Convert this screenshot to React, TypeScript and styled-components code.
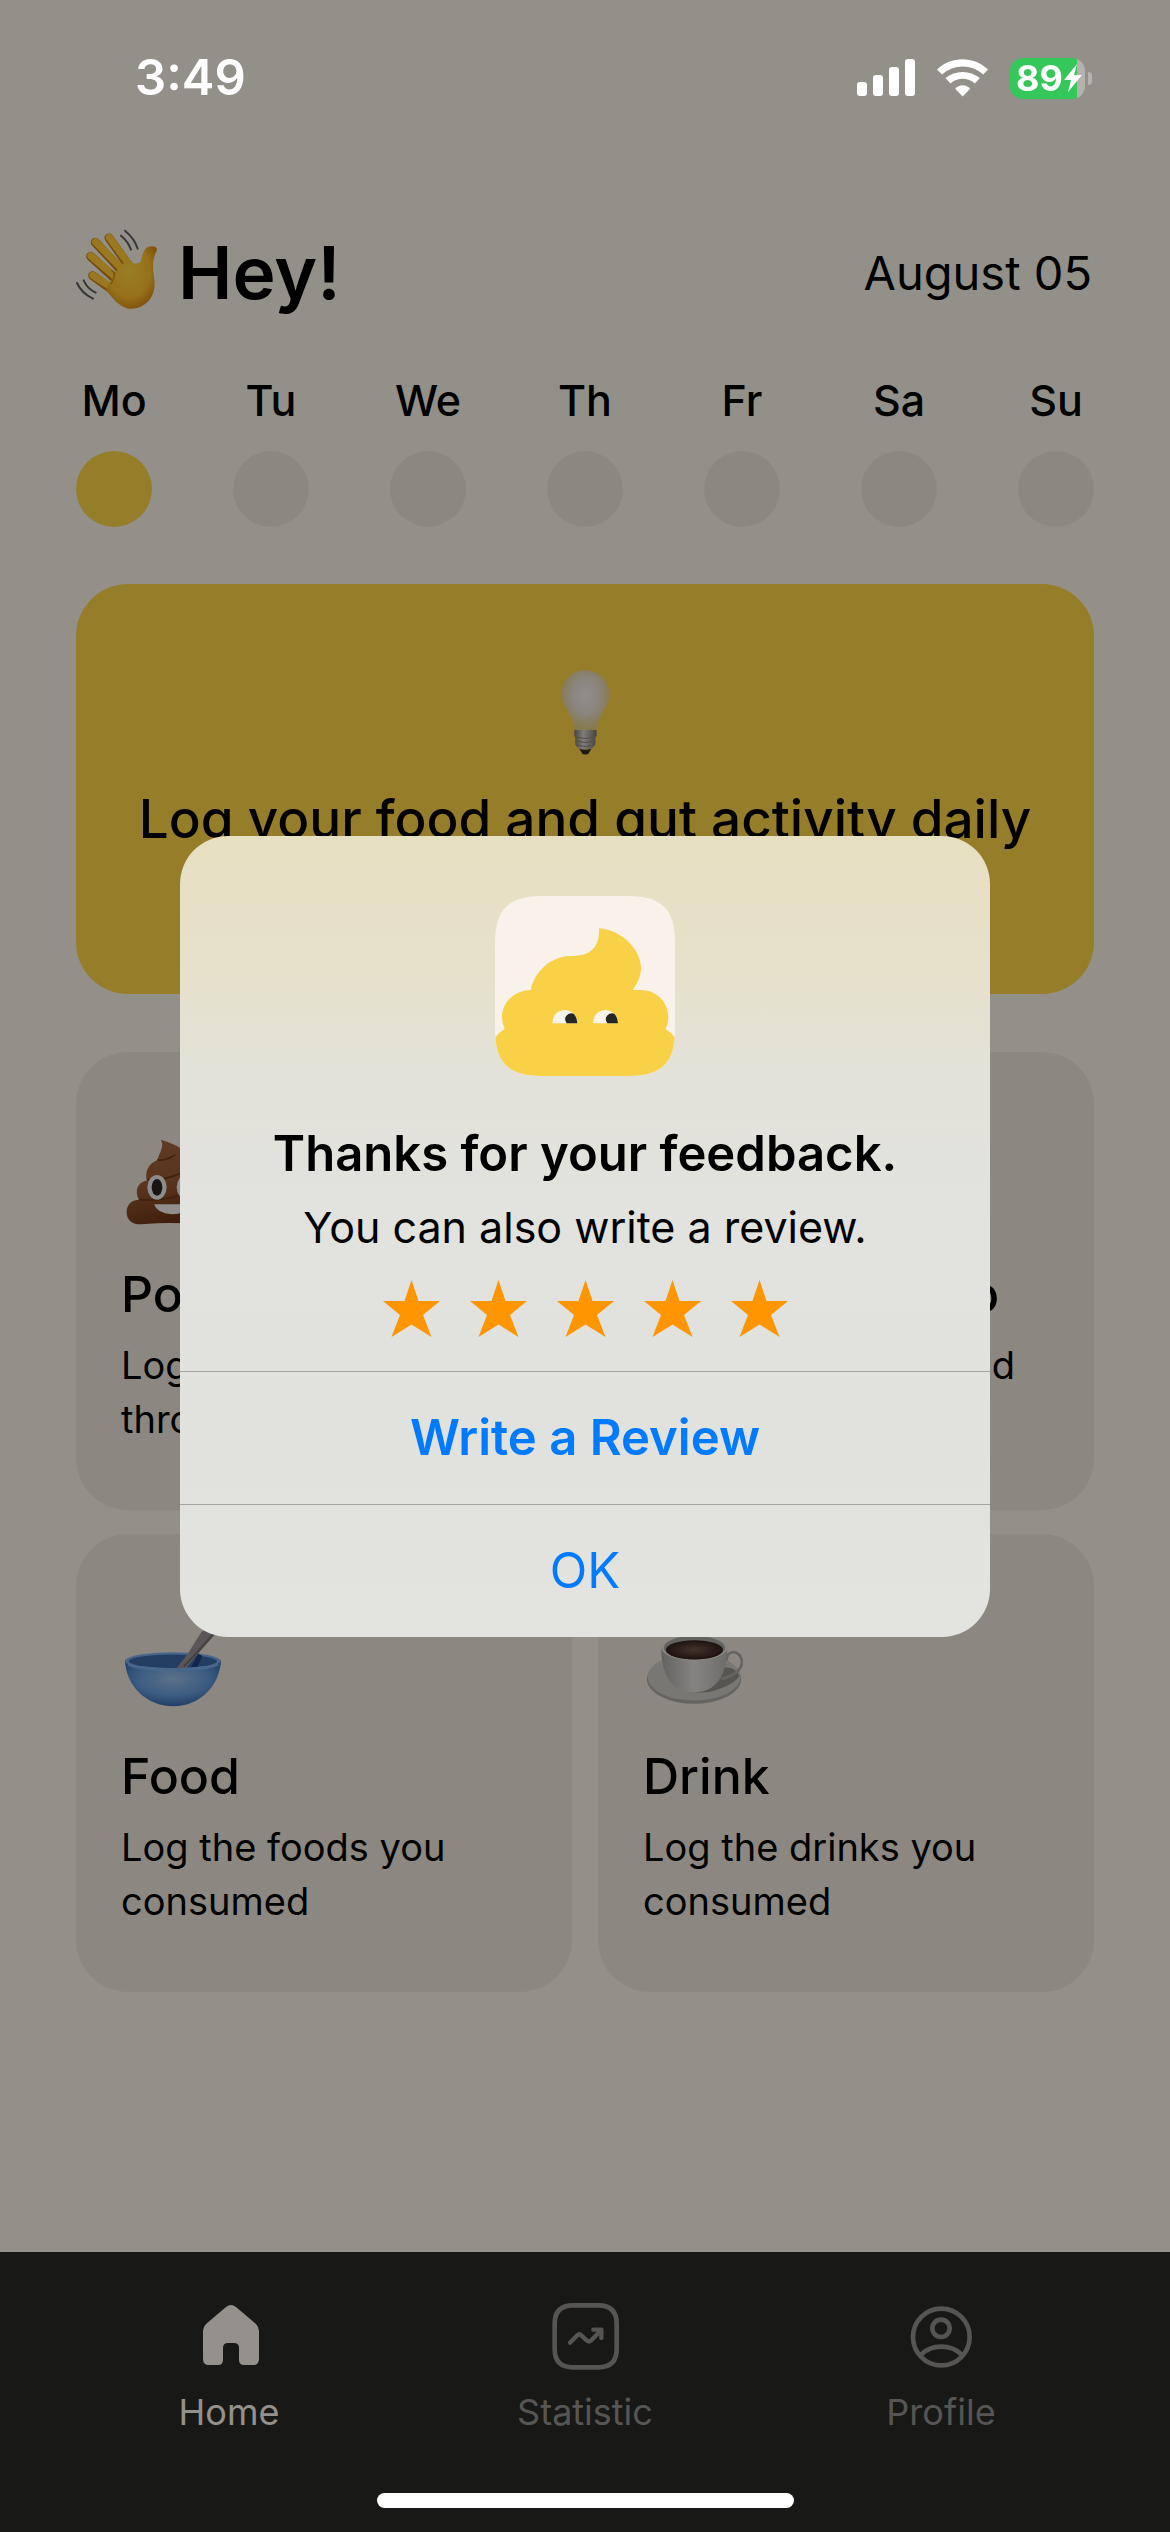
import React from "react";
import styled, { createGlobalStyle } from "styled-components";

const GlobalStyle = createGlobalStyle`
  *, *::before, *::after { box-sizing: border-box; }
  html, body { margin: 0; padding: 0; }
  body {
    font-family: Inter, "Liberation Sans", sans-serif;
    color: #000;
    background: #f5f0e7;
  }
  h1, h2, h3, p { margin: 0; font-weight: inherit; }
  button { font-family: inherit; border: 0; background: none; padding: 0; cursor: pointer; }
`;

const Page = styled.div`
  min-height: 100vh;
  display: flex;
  flex-direction: column;
  background: #f5f0e7;
`;

const StatusBar = styled.header`
  position: relative;
  z-index: 2;
  height: 156px;
  padding: 0 78px 0 135px;
  display: flex;
  align-items: center;
  justify-content: space-between;
  color: #fff;
`;

const Clock = styled.time`
  font-size: 49px;
  line-height: 60px;
  font-weight: 600;
`;

const StatusIcons = styled.div`
  display: flex;
  align-items: center;
  gap: 22px;
`;

const Battery = styled.div`
  position: relative;
  display: flex;
  align-items: center;
  gap: 1px;
  width: 75px;
  height: 41px;
  margin-right: 7px;
  padding-left: 6px;
  border-radius: 13px;
  background: linear-gradient(90deg, #34c759 0 67px, #b5b2ae 67px);
  font-size: 36px;
  line-height: 41px;
  font-weight: 700;

  svg {
    flex-shrink: 0;
  }

  &::after {
    content: "";
    position: absolute;
    left: 78px;
    top: 14px;
    width: 4px;
    height: 13px;
    border-radius: 0 4px 4px 0;
    background: #b5b2ae;
  }
`;

const Main = styled.main`
  flex: 1;
  padding: 74px 76px 60px;
`;

const Greeting = styled.div`
  display: flex;
  align-items: center;
  justify-content: space-between;
  height: 86px;
`;

const Hello = styled.h1`
  display: flex;
  align-items: flex-start;
  gap: 20px;
  font-size: 73px;
  line-height: 88px;
  font-weight: 600;
`;

const Today = styled.time`
  padding-right: 2px;
  font-size: 47px;
  line-height: 54px;
  font-weight: 400;
`;

const Week = styled.div`
  display: flex;
  justify-content: space-between;
  margin-top: 54px;
`;

const Day = styled.button`
  width: 76px;
  display: flex;
  flex-direction: column;
  align-items: center;
  gap: 21px;
  font-size: 43px;
  line-height: 60px;
  font-weight: 500;
  color: #000;
`;

const DayDot = styled.span<{ $active: boolean }>`
  width: 76px;
  height: 76px;
  border-radius: 50%;
  background: ${(p) => (p.$active ? "#f8d147" : "#eae3d7")};
`;

const Banner = styled.section`
  display: flex;
  flex-direction: column;
  align-items: center;
  gap: 26px;
  margin-top: 57px;
  padding: 80px 40px 142px;
  border-radius: 52px;
  background: #f8d147;
`;

const BannerText = styled.p`
  font-size: 53px;
  line-height: 66px;
  font-weight: 500;
  text-align: center;
`;

const Cards = styled.section`
  display: grid;
  grid-template-columns: 1fr 1fr;
  gap: 24px 26px;
  margin-top: 58px;
`;

const Card = styled.article`
  padding: 73px 45px 64px;
  border-radius: 52px;
  background: #eae3d7;
`;

const CardIcon = styled.div`
  height: 100px;
`;

const CardTitle = styled.h2`
  margin-top: 37px;
  font-size: 50px;
  line-height: 64px;
  font-weight: 500;
`;

const CardText = styled.p`
  margin-top: 12px;
  font-size: 38px;
  line-height: 54px;
`;

const TabBar = styled.nav`
  display: flex;
  padding: 50px 51px 100px;
  background: #282825;
`;

const Tab = styled.button<{ $active: boolean }>`
  flex: 1;
  display: flex;
  flex-direction: column;
  align-items: center;
  gap: 22px;
  font-size: 36px;
  line-height: 40px;
  font-weight: 400;
  color: ${(p) => (p.$active ? "#f7f1e8" : "#8f8e8a")};
`;

const HomeIndicator = styled.div`
  position: fixed;
  z-index: 2;
  left: 50%;
  bottom: 24px;
  width: 417px;
  height: 15px;
  margin-left: -208px;
  border-radius: 8px;
  background: #fff;
`;

const Scrim = styled.div`
  position: fixed;
  inset: 0;
  z-index: 1;
  display: flex;
  align-items: center;
  justify-content: center;
  padding-bottom: 60px;
  background: rgba(0, 0, 0, 0.4);
`;

const Dialog = styled.section`
  width: 810px;
  display: flex;
  flex-direction: column;
  border-radius: 48px;
  overflow: hidden;
  background: linear-gradient(180deg, #e7dfc1 0%, #e6e1cb 17%, #e3e2d8 28%, #e2e2de 45%, #e1e1dd 75%, #e3e3df 100%);
`;

const DialogBody = styled.div`
  display: flex;
  flex-direction: column;
  align-items: center;
  padding: 60px 40px 34px;
`;

const DialogTitle = styled.h2`
  margin-top: 46px;
  font-size: 49px;
  line-height: 64px;
  font-weight: 600;
`;

const DialogText = styled.p`
  margin-top: 14px;
  font-size: 43px;
  line-height: 54px;
`;

const Stars = styled.div`
  display: flex;
  gap: 30px;
  margin-top: 26px;
`;

const DialogButton = styled.button<{ $primary?: boolean }>`
  height: 133px;
  border-top: 1px solid #a4a4a1;
  font-size: 49px;
  line-height: 60px;
  font-weight: ${(p) => (p.$primary ? 600 : 400)};
  color: #007aff;
`;

const Signal = () => (
  <svg width="58" height="38" viewBox="0 0 58 38" fill="#fff" aria-hidden="true">
    <rect x="0" y="23" width="10" height="14" rx="3" />
    <rect x="16" y="16" width="10" height="21" rx="3" />
    <rect x="32" y="8" width="10" height="29" rx="3" />
    <rect x="48" y="0" width="10" height="37" rx="3" />
  </svg>
);

const Wifi = () => (
  <svg width="51" height="38" viewBox="348 57 151 112" fill="#fff" aria-hidden="true">
    <path d="M348 88 C390 47 457 47 499 88 L485 103 C451 71 397 71 363 103 Z" />
    <path d="M373 113 C402 89 446 89 475 113 L460 129 C440 111 408 111 388 129 Z" />
    <path d="M402 145 C413 131 435 131 446 145 L424 168 Z" />
  </svg>
);

const Bolt = () => (
  <svg width="18" height="28" viewBox="0 0 18 28" fill="#fff" aria-hidden="true">
    <path d="M13 0 L0 16 H7 L4 28 L18 11 H10 Z" />
  </svg>
);

const WavingHand = () => (
  <svg width="82" height="82" viewBox="48 60 246 246" fill="none" strokeLinecap="round" aria-hidden="true">
    <defs>
      <radialGradient id="palm" cx="0.45" cy="0.4" r="0.65">
        <stop offset="0" stopColor="#ffd23f" />
        <stop offset="0.65" stopColor="#fbbc2c" />
        <stop offset="1" stopColor="#cf8310" />
      </radialGradient>
    </defs>
    <g stroke="#c47c14" strokeWidth="27">
      <path d="M98 200 L160 245" />
      <path d="M92 142 L175 218" />
      <path d="M106 100 L190 190" />
      <path d="M147 87 L212 178" />
    </g>
    <g stroke="#ffc934" strokeWidth="22">
      <path d="M99 199 L165 242" />
      <path d="M93 141 L178 214" />
      <path d="M107 99 L194 188" />
      <path d="M148 86 L216 178" />
    </g>
    <path
      d="M146 224 Q160 210 164 192 Q176 180 188 164 Q204 158 220 163 Q236 166 243 155 C247 138 250 120 265 113 C279 109 294 113 290 125 C281 142 277 162 280 190 C286 220 285 245 274 264 C262 287 235 301 208 299 C188 296 173 284 158 267 L137 244 Z"
      fill="url(#palm)"
    />
    <path d="M160 188 Q168 200 153 224 M188 161 L178 150 M164 192 L155 185" stroke="#c98817" strokeWidth="4" />
    <g stroke="#5c5c5e" strokeWidth="6">
      <path d="M195 65 Q224 89 233 119" />
      <path d="M183 80 Q205 98 213 122" />
      <path d="M51 222 Q64 252 99 269" />
      <path d="M71 214 Q82 239 107 251" />
    </g>
  </svg>
);

const Bulb = () => (
  <svg width="96" height="96" viewBox="172 72 288 288" aria-hidden="true">
    <defs>
      <radialGradient id="glass" cx="0.5" cy="0.42" r="0.6">
        <stop offset="0" stopColor="#f0ecef" />
        <stop offset="0.5" stopColor="#e4dfdc" stopOpacity="0.92" />
        <stop offset="1" stopColor="#d9c690" stopOpacity="0.7" />
      </radialGradient>
      <linearGradient id="socket">
        <stop offset="0" stopColor="#77736b" />
        <stop offset="0.4" stopColor="#d5d0c8" />
        <stop offset="1" stopColor="#77736b" />
      </linearGradient>
    </defs>
    <path d="M316 91 C275 91 246 123 246 163 C246 197 270 216 278 240 Q284 256 286 272 H350 Q352 256 358 240 C366 216 389 197 389 163 C389 123 357 91 316 91 Z" fill="url(#glass)" />
    <path d="M284 270 H351 V288 L347 292 V314 Q338 325 332 328 H302 Q292 323 287 314 V292 L284 288 Z" fill="url(#socket)" />
    <path d="M286 291 Q318 300 349 291 M287 303 Q318 312 348 303 M291 315 Q318 324 344 315" stroke="#8a857d" strokeWidth="3" fill="none" />
    <path d="M299 327 Q317 332 335 327 L326 341 Q317 346 308 341 Z" fill="#302d2b" />
  </svg>
);

const Poop = () => (
  <svg width="100" height="100" viewBox="188 260 300 300" aria-hidden="true">
    <defs>
      <linearGradient id="brown" x1="0" y1="0" x2="0.3" y2="1">
        <stop offset="0" stopColor="#a4683f" />
        <stop offset="0.6" stopColor="#95562f" />
        <stop offset="1" stopColor="#6b3617" />
      </linearGradient>
    </defs>
    <path
      d="M307 304 C345 315 392 335 389 367 C413 374 419 401 409 421 C439 425 450 458 433 484 C462 486 474 507 469 529 C463 552 442 560 417 558 Q338 550 258 557 C230 562 206 550 205 524 C204 499 219 485 242 484 C229 462 235 431 265 427 C260 399 268 378 297 365 C302 345 320 323 307 304 Z"
      fill="url(#brown)"
    />
    <path d="M268 423 Q320 428 376 400 M242 484 Q325 492 409 455 M297 365 Q325 368 351 349" stroke="#693719" strokeWidth="5" fill="none" />
    <ellipse cx="296" cy="447" rx="29" ry="37" fill="#e9e9e7" />
    <ellipse cx="384" cy="447" rx="29" ry="37" fill="#e9e9e7" />
    <ellipse cx="296" cy="447" rx="16" ry="25" fill="#262525" />
    <ellipse cx="384" cy="447" rx="16" ry="25" fill="#262525" />
    <path d="M287 498 H393 Q382 528 340 528 Q297 526 287 498 Z" fill="#f0efed" />
  </svg>
);

const Heart = () => (
  <svg width="100" height="100" viewBox="0 0 100 100" aria-hidden="true">
    <path d="M50 88 C-20 40 20 -6 50 26 C80 -6 120 40 50 88 Z" fill="#e2483d" />
  </svg>
);

const Bowl = () => (
  <svg width="100" height="100" viewBox="170 340 280 280" aria-hidden="true">
    <defs>
      <radialGradient id="bowl" cx="0.5" cy="0.4" r="0.6">
        <stop offset="0" stopColor="#98bce4" />
        <stop offset="0.6" stopColor="#679bd8" />
        <stop offset="1" stopColor="#376aa9" />
      </radialGradient>
    </defs>
    <path d="M181 490 C184 560 240 618 316 618 C392 618 446 560 450 490 Z" fill="url(#bowl)" />
    <ellipse cx="315" cy="491" rx="134" ry="24" fill="#7aabe6" />
    <ellipse cx="315" cy="492" rx="124" ry="19" fill="#3d68a5" />
    <path d="M365 509 Q378 492 385 470 L398 477 L384 507 Z" fill="#223f7d" />
    <path d="M326 511 L355 474 L395 410 L442 382 L441 408 L384 473 L353 511 Z" fill="#989294" />
    <path d="M346 507 L380 470 L438 405" stroke="#756f72" strokeWidth="6" fill="none" />
    <path d="M190 500 Q220 515 316 515 Q410 515 442 500" stroke="#7aabe6" strokeWidth="8" fill="none" />
  </svg>
);

const Cup = () => (
  <svg width="100" height="100" viewBox="174 340 280 280" aria-hidden="true">
    <defs>
      <linearGradient id="cup">
        <stop offset="0" stopColor="#a5a39f" />
        <stop offset="0.5" stopColor="#dedcd8" />
        <stop offset="1" stopColor="#b7b5b1" />
      </linearGradient>
      <radialGradient id="coffee">
        <stop offset="0" stopColor="#70564c" />
        <stop offset="1" stopColor="#321f19" />
      </radialGradient>
    </defs>
    <ellipse cx="317" cy="542" rx="132" ry="69" fill="#a9a7a1" />
    <ellipse cx="317" cy="536" rx="130" ry="66" fill="#c8c6c0" />
    <path d="M360 578 Q430 560 444 532 Q430 505 400 510 Q390 558 320 580 Z" fill="#918e88" />
    <path d="M408 490 C406 458 447 458 451 492 C452 516 427 534 394 541" stroke="#aaa8a3" strokeWidth="8" fill="none" />
    <path d="M225 452 C225 510 242 579 317 579 C392 579 410 510 410 452 Z" fill="url(#cup)" />
    <ellipse cx="318" cy="452" rx="93" ry="38" fill="#e4e2dd" />
    <ellipse cx="318" cy="454" rx="86" ry="33" fill="#a6a39e" />
    <ellipse cx="318" cy="460" rx="80" ry="27" fill="url(#coffee)" />
  </svg>
);

const AppIcon = () => (
  <svg width="180" height="180" viewBox="75 47 540 540" role="img" aria-label="App icon">
    <defs>
      <clipPath id="tile">
        <path d="M215 47 H475 C575 47 615 87 615 187 V447 C615 547 575 587 475 587 H215 C115 587 75 547 75 447 V187 C75 87 115 47 215 47 Z" />
      </clipPath>
    </defs>
    <g clipPath="url(#tile)">
      <rect x="75" y="47" width="540" height="540" fill="#f8f2ea" />
      <path
        d="M387 144 C455 149 513 207 513 264 Q513 296 488 329 H514 C560 330 595 366 595 410 Q595 430 587 446 Q604 457 615 472 V587 H75 V472 Q87 456 104 446 Q96 430 96 410 C96 366 133 330 182 329 C194 274 240 230 298 227 Q345 229 365 210 Q389 190 387 144 Z"
        fill="#f8d147"
      />
      <path d="M247 429 Q249 391 284 389 Q320 391 322 429 Z M369 429 Q371 391 406 389 Q442 391 444 429 Z" fill="#f8f4e9" />
      <path d="M290 429 Q281 416 289 406 Q299 396 311 400 Q321 410 322 429 Z M412 429 Q403 416 411 406 Q421 396 433 400 Q443 410 444 429 Z" fill="#262622" />
    </g>
  </svg>
);

const Star = () => (
  <svg width="57" height="57" viewBox="0 0 57 57" fill="#ff9500" aria-hidden="true">
    <path d="M28.500 0 L35.500 21 H57 L40 35 L48.500 57 L28.500 44.500 L8.500 57 L17 35 L0 21 H21.500 Z" />
  </svg>
);

const HomeIcon = () => (
  <svg width="68" height="68" viewBox="0 0 68 68" fill="currentColor" aria-hidden="true">
    <path d="M31 5 Q36 1 41 5 L61 22 Q64 25 64 29 V57 Q64 63 58 63 H49 Q44 63 44 58 V46 Q44 41 39 41 H33 Q28 41 28 46 V58 Q28 63 23 63 H14 Q8 63 8 57 V29 Q8 25 11 22 Z" />
  </svg>
);

const StatisticIcon = () => (
  <svg width="68" height="68" viewBox="34 38 204 204" fill="none" stroke="currentColor" strokeWidth="14" strokeLinecap="round" strokeLinejoin="round" aria-hidden="true">
    <path d="M100 48 H176 Q231 48 231 103 V179 Q231 234 176 234 H100 Q45 234 45 179 V103 Q45 48 100 48 Z" />
    <path d="M91 160 L113 138 Q119 132 125 138 L141 153 Q148 160 155 153 L182 125" strokeWidth="13" />
    <path d="M161 121 H185 V146" strokeWidth="13" />
    <path d="M170 121 H185 V136 Z" fill="currentColor" strokeWidth="6" />
  </svg>
);

const ProfileIcon = () => (
  <svg width="68" height="68" viewBox="1099 36 204 204" fill="none" stroke="currentColor" strokeWidth="14" aria-hidden="true">
    <circle cx="1202" cy="141" r="85" />
    <circle cx="1201" cy="115" r="26" />
    <path d="M1141 194 Q1165 170 1202 170 Q1239 170 1263 194" />
  </svg>
);

const days = ["Mo", "Tu", "We", "Th", "Fr", "Sa", "Su"];

const cards = [
  { title: "Poop", text: "Log your poop throughout the day", Icon: Poop },
  { title: "Energy & sleep", text: "Log your energy and sleep", Icon: Heart },
  { title: "Food", text: "Log the foods you consumed", Icon: Bowl },
  { title: "Drink", text: "Log the drinks you consumed", Icon: Cup },
];

const tabs = [
  { label: "Home", Icon: HomeIcon },
  { label: "Statistic", Icon: StatisticIcon },
  { label: "Profile", Icon: ProfileIcon },
];

export default function App() {
  return (
    <Page>
      <GlobalStyle />
      <StatusBar>
        <Clock>3:49</Clock>
        <StatusIcons>
          <Signal />
          <Wifi />
          <Battery>
            89
            <Bolt />
          </Battery>
        </StatusIcons>
      </StatusBar>

      <Main>
        <Greeting>
          <Hello>
            <WavingHand />
            Hey!
          </Hello>
          <Today>August 05</Today>
        </Greeting>

        <Week>
          {days.map((day, i) => (
            <Day key={day}>
              {day}
              <DayDot $active={i === 0} />
            </Day>
          ))}
        </Week>

        <Banner>
          <Bulb />
          <BannerText>Log your food and gut activity daily</BannerText>
        </Banner>

        <Cards>
          {cards.map(({ title, text, Icon }) => (
            <Card key={title}>
              <CardIcon>
                <Icon />
              </CardIcon>
              <CardTitle>{title}</CardTitle>
              <CardText>{text}</CardText>
            </Card>
          ))}
        </Cards>
      </Main>

      <TabBar>
        {tabs.map(({ label, Icon }, i) => (
          <Tab key={label} $active={i === 0}>
            <Icon />
            {label}
          </Tab>
        ))}
      </TabBar>

      <Scrim>
        <Dialog role="dialog" aria-labelledby="dialog-title">
          <DialogBody>
            <AppIcon />
            <DialogTitle id="dialog-title">Thanks for your feedback.</DialogTitle>
            <DialogText>You can also write a review.</DialogText>
            <Stars role="img" aria-label="5 stars">
              {[1, 2, 3, 4, 5].map((n) => (
                <Star key={n} />
              ))}
            </Stars>
          </DialogBody>
          <DialogButton $primary>Write a Review</DialogButton>
          <DialogButton>OK</DialogButton>
        </Dialog>
      </Scrim>
      <HomeIndicator />
    </Page>
  );
}
